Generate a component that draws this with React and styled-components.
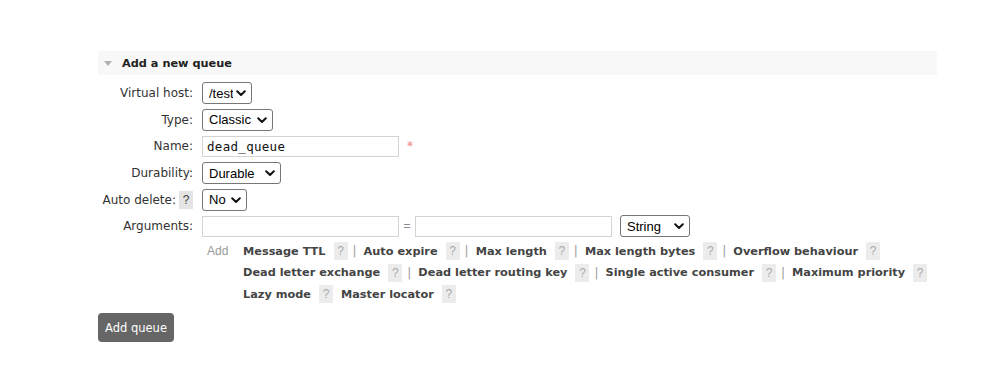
import React from 'react';
import styled, { createGlobalStyle } from 'styled-components';

const GlobalStyle = createGlobalStyle`
  body {
    margin: 0;
    background: #fff;
    font-family: 'DejaVu Sans', Verdana, sans-serif;
    font-size: 12px;
    color: #333;
  }
`;

const helpRows = [
  ['Message TTL', 'Auto expire', 'Max length', 'Max length bytes', 'Overflow behaviour'],
  ['Dead letter exchange', 'Dead letter routing key', 'Single active consumer', 'Maximum priority'],
  ['Lazy mode', 'Master locator'],
];

function Select({ width, value, options }) {
  return (
    <SelectWrap $width={width}>
      <NativeSelect defaultValue={value}>
        {options.map((o) => (
          <option key={o}>{o}</option>
        ))}
      </NativeSelect>
      <Chevron width="10" height="7" viewBox="0 0 10 7">
        <path d="M1.2 1.3 L5 5 L8.8 1.3" fill="none" stroke="#111" strokeWidth="2" strokeLinecap="round" strokeLinejoin="round" />
      </Chevron>
    </SelectWrap>
  );
}

function HelpLine({ items, separated }) {
  return (
    <Line>
      {items.map((item, i) => (
        <React.Fragment key={item}>
          {i > 0 && separated && <Sep>|</Sep>}
          {i > 0 && !separated && <Space />}
          <HelpItem>{item}</HelpItem>
          <Help>?</Help>
        </React.Fragment>
      ))}
    </Line>
  );
}

export default function App() {
  return (
    <>
      <GlobalStyle />
      <Page>
        <SectionHeader>
          <Triangle />
          <HeaderTitle>Add a new queue</HeaderTitle>
        </SectionHeader>
        <Form>
          <Label>Virtual host:</Label>
          <Cell>
            <Select width={50} value="/test" options={['/', '/test']} />
          </Cell>

          <Label>Type:</Label>
          <Cell>
            <Select width={71} value="Classic" options={['Classic', 'Quorum', 'Stream']} />
          </Cell>

          <Label>Name:</Label>
          <Cell>
            <MonoInput $width={197} defaultValue="dead_queue" />
            <Required>*</Required>
          </Cell>

          <Label>Durability:</Label>
          <Cell>
            <Select width={79} value="Durable" options={['Durable', 'Transient']} />
          </Cell>

          <Label>
            Auto delete: <Help $inline>?</Help>
          </Label>
          <Cell>
            <Select width={45} value="No" options={['No', 'Yes']} />
          </Cell>

          <Label>Arguments:</Label>
          <Cell>
            <TextInput $width={197} />
            <Equals>=</Equals>
            <TextInput $width={197} />
            <Gap />
            <Select width={70} value="String" options={['String', 'Number', 'Boolean', 'List']} />
          </Cell>

          <span />
          <HelpBlock>
            <AddText>Add</AddText>
            <Lines>
              <HelpLine items={helpRows[0]} separated />
              <HelpLine items={helpRows[1]} separated />
              <HelpLine items={helpRows[2]} />
            </Lines>
          </HelpBlock>
        </Form>
        <Button>Add queue</Button>
      </Page>
    </>
  );
}

const Page = styled.div`
  padding: 51px 0 0 98px;
  width: 839px;
`;

const SectionHeader = styled.div`
  display: flex;
  align-items: center;
  height: 24px;
  background: #f8f8f8;
`;

const Triangle = styled.span`
  width: 0;
  height: 0;
  margin: 1px 10px 0 6px;
  border-left: 4.5px solid transparent;
  border-right: 4.5px solid transparent;
  border-top: 5px solid #b0b0b0;
`;

const HeaderTitle = styled.span`
  font-weight: bold;
  font-size: 11.3px;
  color: #222;
`;

const Form = styled.div`
  display: grid;
  grid-template-columns: 105px auto;
  grid-template-rows: repeat(6, 26.6px) auto;
  column-gap: 9px;
  margin: 5px 0 0 -10px;
`;

const Label = styled.div`
  display: flex;
  align-items: center;
  justify-content: flex-end;
  white-space: nowrap;
  color: #333;
`;

const Cell = styled.div`
  display: flex;
  align-items: center;
`;

const SelectWrap = styled.div`
  position: relative;
  display: inline-flex;
  width: ${(p) => p.$width}px;
  height: 22px;
`;

const NativeSelect = styled.select`
  appearance: none;
  width: 100%;
  height: 100%;
  margin: 0;
  padding: 0 18px 0 6px;
  border: 1px solid #777;
  border-radius: 3px;
  background: #fff;
  font-family: 'Liberation Sans', Arial, sans-serif;
  font-size: 13px;
  color: #000;
`;

const Chevron = styled.svg`
  position: absolute;
  right: 6px;
  top: 8px;
  pointer-events: none;
`;

const TextInput = styled.input`
  box-sizing: border-box;
  width: ${(p) => p.$width}px;
  height: 21px;
  margin: 0;
  padding: 0 4px;
  border: 1px solid #d4d4d4;
  border-radius: 0;
  font-family: 'Liberation Sans', Arial, sans-serif;
  font-size: 13px;
  color: #111;
  outline: none;
`;

const MonoInput = styled(TextInput)`
  font-family: 'DejaVu Sans Mono', 'Liberation Mono', monospace;
  font-size: 12.5px;
  letter-spacing: 0.3px;
`;

const Required = styled.span`
  margin-left: 8px;
  color: #f08080;
  font-size: 12px;
`;

const Equals = styled.span`
  width: 16px;
  text-align: center;
  color: #888;
  font-family: 'Liberation Sans', Arial, sans-serif;
  font-size: 12px;
`;

const Gap = styled.span`
  width: 8px;
`;

const Help = styled.span`
  display: inline-flex;
  align-items: center;
  justify-content: center;
  width: 14px;
  height: 18px;
  background: ${(p) => (p.$inline ? '#e4e4e4' : '#ececec')};
  color: ${(p) => (p.$inline ? '#444' : '#aaa')};
  font-family: 'Liberation Sans', Arial, sans-serif;
  font-size: 12px;
  margin-left: ${(p) => (p.$inline ? '3px' : '8px')};
`;

const HelpBlock = styled.div`
  display: flex;
  align-items: flex-start;
  padding-top: 1px;
`;

const AddText = styled.span`
  width: 41px;
  padding-left: 5px;
  box-sizing: border-box;
  line-height: 21.5px;
  font-family: 'Liberation Sans', Arial, sans-serif;
  font-size: 12px;
  color: #999;
`;

const Lines = styled.div`
  display: flex;
  flex-direction: column;
`;

const Line = styled.div`
  display: flex;
  align-items: center;
  height: 21.5px;
  white-space: nowrap;
`;

const HelpItem = styled.span`
  font-weight: bold;
  font-size: 11.3px;
  color: #444;
`;

const Sep = styled.span`
  margin: 0 7px 0 5px;
  color: #999;
  font-size: 12px;
`;

const Space = styled.span`
  width: 8px;
`;

const Button = styled.button`
  display: block;
  margin-top: 8px;
  width: 76px;
  height: 29px;
  padding: 0;
  border: none;
  border-radius: 4px;
  background: #666;
  color: #fff;
  font-family: 'DejaVu Sans', Verdana, sans-serif;
  font-size: 11.5px;
`;
